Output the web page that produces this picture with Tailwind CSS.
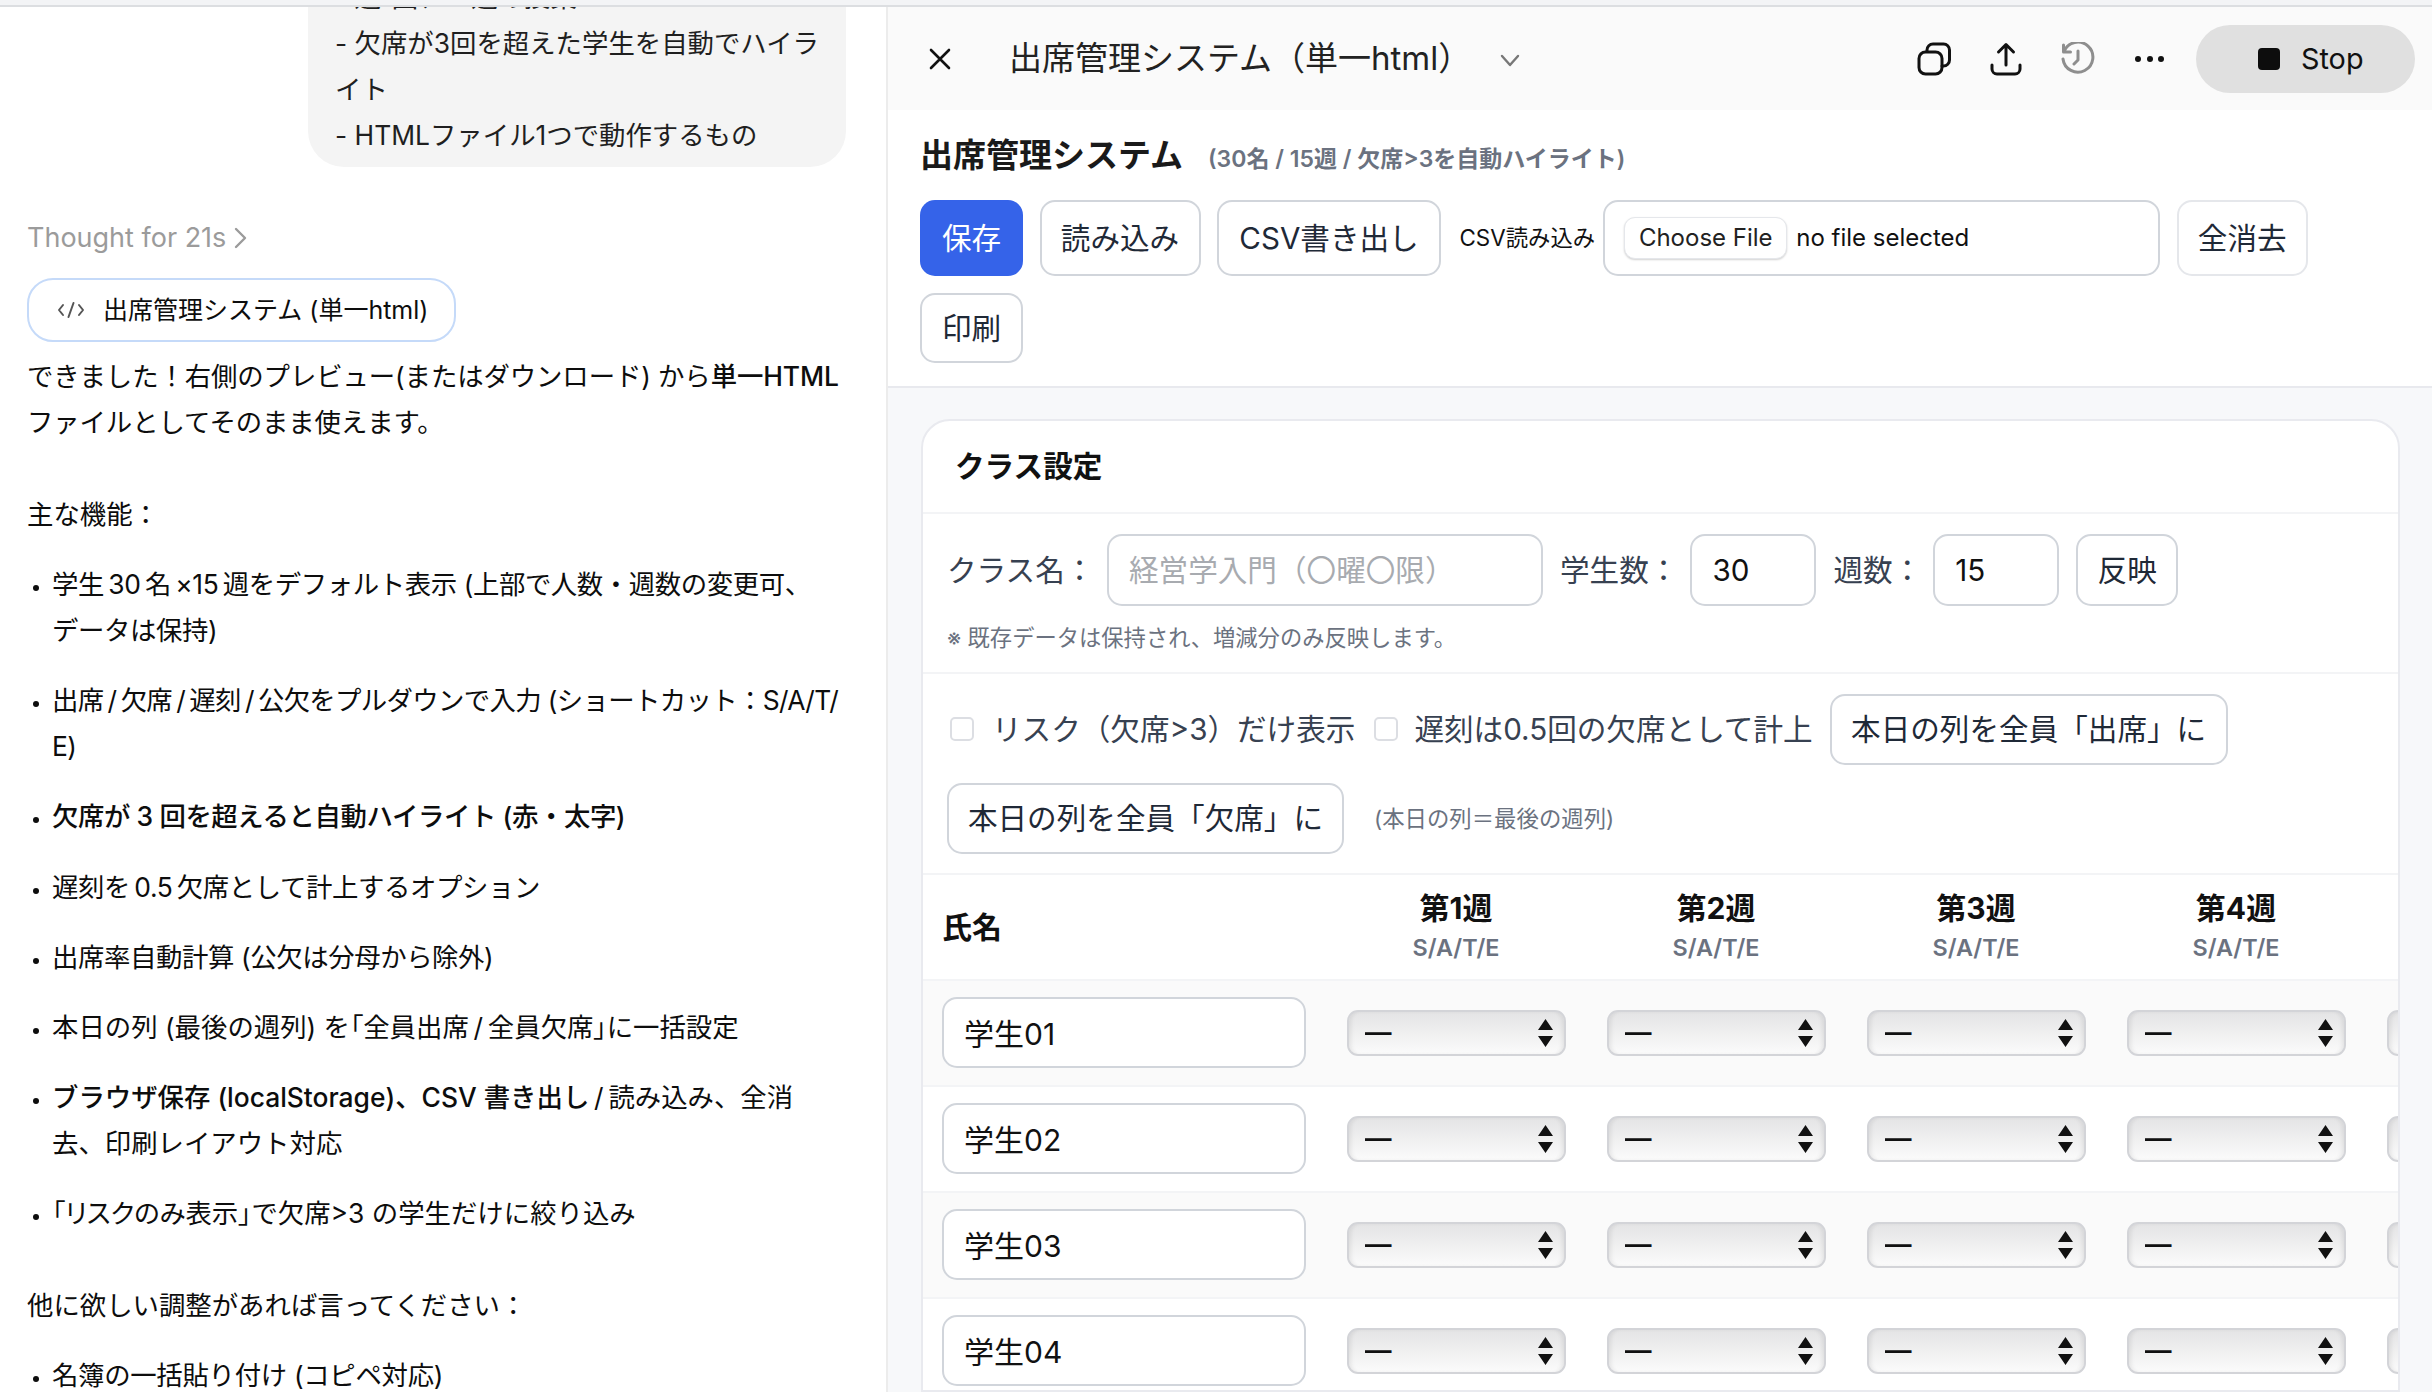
<!DOCTYPE html>
<html lang="ja">
<head>
  <meta charset="UTF-8" />
  <title>出席管理システム</title>
  <script src="https://cdn.jsdelivr.net/npm/@tailwindcss/browser@4"></script>
</head>
<body class="h-screen overflow-hidden bg-white text-[#0d0d0d] font-['Inter','Noto_Sans_CJK_JP',sans-serif]">
  <div class="h-[7px] bg-[#f3f4f6] border-b-2 border-[#dcdee1]"></div>
  <div class="flex h-[1385px]">

    <!-- chat -->
    <aside class="w-[888px] shrink-0 border-r-2 border-[#ececec] overflow-hidden pl-[27px] text-[26.4px] leading-[46px]">
      <div class="-mt-[33px] ml-[281px] w-[538px] bg-[#f4f4f4] rounded-b-[36px] pl-[27px] pb-[9px] text-[#1f1f1f]">
        - 週1回、15週の授業<br>
        - 欠席が3回を超えた学生を自動でハイラ<br>イト<br>
        - HTMLファイル1つで動作するもの
      </div>

      <div class="mt-[48px] flex items-center gap-[8px] text-[27px] text-[#9b9b9b]">
        Thought for 21s
        <svg class="w-[14px] h-[24px]" viewBox="0 0 14 24" fill="none" stroke="currentColor" stroke-width="2.4" stroke-linecap="round" stroke-linejoin="round"><path d="M2 3l9 9-9 9"/></svg>
      </div>

      <div class="mt-[17px] w-[429px] h-[64px] border-2 border-[#c5daf9] rounded-[26px] flex items-center pl-[28px] gap-[18px] text-[24px]">
        <svg class="w-[28px] h-[20px] shrink-0" viewBox="0 0 28 20" fill="none" stroke="#555" stroke-width="2" stroke-linecap="round" stroke-linejoin="round"><path d="M6 5l-4 5 4 5M22 5l4 5-4 5M16.500 3l-5 14"/></svg>
        <span class="text-[25px]">出席管理システム (単一html)</span>
      </div>

      <p class="mt-[11px] tracking-[-0.1px]">できました！右側のプレビュー(またはダウンロード) から<span class="font-medium">単一HTML</span><br>ファイルとしてそのまま使えます。</p>

      <p class="mt-[46px]">主な機能：</p>
      <ul class="mt-[24px] list-disc pl-[25px] space-y-[24.2px] whitespace-nowrap tracking-[-0.4px] marker:text-[20px]">
        <li>学生&thinsp;30&thinsp;名&thinsp;×15&thinsp;週をデフォルト表示 (上部で人数・週数の変更可、<br>データは保持)</li>
        <li class="tracking-[-0.65px]">出席&thinsp;/&thinsp;欠席&thinsp;/&thinsp;遅刻&thinsp;/&thinsp;公欠をプルダウンで入力 (ショートカット：S/A/T/<br>E)</li>
        <li class="font-medium">欠席が 3 回を超えると自動ハイライト (赤・太字)</li>
        <li>遅刻を&thinsp;0.5&thinsp;欠席として計上するオプション</li>
        <li>出席率自動計算 (公欠は分母から除外)</li>
        <li class="tracking-normal">本日の列 (最後の週列) を<span class="[font-feature-settings:'palt']">「全員出席&thinsp;/&thinsp;全員欠席」</span>に一括設定</li>
        <li class="tracking-normal"><span class="font-medium">ブラウザ保存 (localStorage)、CSV 書き出し</span>&thinsp;/&thinsp;読み込み、全消<br>去、印刷レイアウト対応</li>
        <li class="tracking-normal"><span class="[font-feature-settings:'palt']">「リスクのみ表示」</span>で欠席>3 の学生だけに絞り込み</li>
      </ul>

      <p class="mt-[46px]">他に欲しい調整があれば言ってください：</p>
      <ul class="mt-[24px] list-disc pl-[25px] marker:text-[20px]">
        <li class="tracking-[-0.3px]">名簿の一括貼り付け (コピペ対応)</li>
      </ul>
    </aside>

    <!-- preview -->
    <main class="flex-1 min-w-0 flex flex-col bg-[#f7f8fa]">
      <header class="h-[103px] shrink-0 bg-[#fafafa] flex items-center pl-[41px] pr-[17px]">
        <svg class="w-[22px] h-[22px] shrink-0" viewBox="0 0 22 22" fill="none" stroke="#111" stroke-width="2.6" stroke-linecap="round"><path d="M2 2l18 18M20 2L2 20"/></svg>
        <span class="ml-[58px] text-[33px] leading-none text-[#222]">出席管理システム（単一html）</span>
        <svg class="ml-[29px] mt-[3px] w-[20px] h-[13px] shrink-0" viewBox="0 0 20 13" fill="none" stroke="#777" stroke-width="2.4" stroke-linecap="round" stroke-linejoin="round"><path d="M2 2l8 9 8-9"/></svg>

        <div class="ml-auto flex items-center gap-[38px]">
          <svg class="w-[34px] h-[34px]" viewBox="0 0 34 34" fill="none" stroke="#111" stroke-width="3"><rect x="2" y="10" width="23" height="22" rx="6.500"/><path d="M10 9.500V8a6 6 0 0 1 6-6h10.500a6 6 0 0 1 6 6v10a6 6 0 0 1-6 6H25" stroke-linecap="round"/></svg>
          <svg class="w-[34px] h-[34px]" viewBox="0 0 34 34" fill="none" stroke="#111" stroke-width="3" stroke-linecap="round" stroke-linejoin="round"><path d="M17 3v20M9.500 10L17 2.500 24.500 10M3 23v4a5 5 0 0 0 5 5h18a5 5 0 0 0 5-5v-4"/></svg>
          <svg class="w-[34px] h-[34px]" viewBox="0 0 34 34" fill="none" stroke="#8e8e8e" stroke-width="3" stroke-linecap="round" stroke-linejoin="round"><path d="M3 9.500A15 15 0 1 1 2 17M2.500 3v7h7M17 9v9l-4 4"/></svg>
          <svg class="w-[34px] h-[34px]" viewBox="0 0 34 34" fill="#111"><circle cx="5" cy="17" r="3"/><circle cx="17" cy="17" r="3"/><circle cx="28" cy="17" r="3"/></svg>
        </div>
        <button class="ml-[29px] w-[219px] h-[68px] rounded-full bg-[#e0e0e0] flex items-center pl-[62px] gap-[21px] text-[28.8px] text-[#111]">
          <span class="w-[22px] h-[22px] rounded-[4px] bg-[#0d0d0d]"></span>
          Stop
        </button>
      </header>

      <section class="h-[278px] shrink-0 bg-white border-b-2 border-[#e8e9ee] pl-[32px] pr-[32px]">
        <h1 class="h-[90px] pt-[2px] flex items-center gap-[25px] text-[33px] font-bold text-[#1a1a1a]">
          出席管理システム
          <span class="mt-[6px] text-[23px] font-semibold text-[#6b7280]">(30名 / 15週 / 欠席>3を自動ハイライト)</span>
        </h1>
        <div class="flex flex-wrap gap-x-[16.500px] gap-y-[17px] text-[29.6px] text-[#1f2937]">
          <button class="w-[103px] h-[76px] rounded-[15px] bg-[#3563e9] text-white">保存</button>
          <button class="w-[161px] h-[76px] rounded-[15px] bg-white border-2 border-[#d1d5db]">読み込み</button>
          <button class="w-[224px] h-[76px] rounded-[15px] bg-white border-2 border-[#d1d5db]">CSV書き出し</button>
          <div class="flex items-center gap-[8px] ml-[2px]">
            <span class="text-[22.4px] text-[#111]">CSV読み込み</span>
            <div class="w-[557px] h-[76px] rounded-[15px] border-2 border-[#d1d5db] flex items-center pl-[19px] gap-[9px] text-[25px] text-[#111]">
              <button class="w-[163px] h-[42px] rounded-[11px] border border-[#e5e7eb] shadow-[0_1px_2px_rgba(0,0,0,.18)] bg-white text-[24px] text-[#222]">Choose File</button>
              <span class="text-[24px]">no file selected</span>
            </div>
          </div>
          <button class="w-[131px] h-[76px] rounded-[15px] bg-white border-2 border-[#e5e7eb]">全消去</button>
          <button class="w-[103px] h-[70px] rounded-[15px] bg-white border-2 border-[#d1d5db]">印刷</button>
        </div>
      </section>

      <div class="flex-1 min-h-0 pt-[31px] pl-[33px] pr-[32px]">
        <div class="bg-white border-2 border-[#e9eaef] rounded-t-[29px] overflow-hidden h-full">
          <div class="h-[93px] pl-[32px] flex items-center border-b-2 border-[#f3f4f6] text-[29.6px] font-bold text-[#111]">クラス設定</div>

          <div class="h-[160px] pl-[24px] pt-[20px] border-b-2 border-[#f3f4f6]">
            <div class="flex items-center h-[72px] text-[29.6px] text-[#374151]">
              <label class="w-[144px] whitespace-nowrap">クラス名：</label>
              <input class="ml-[16px] w-[436px] h-[72px] rounded-[15px] border-2 border-[#d1d5db] px-[20px] placeholder:text-[#a8abb0]" placeholder="経営学入門（〇曜〇限）">
              <label class="ml-[17px]">学生数：</label>
              <input class="ml-[12px] w-[126px] h-[72px] rounded-[15px] border-2 border-[#d1d5db] px-[20px] text-[#111]" value="30">
              <label class="ml-[17px]">週数：</label>
              <input class="ml-[11px] w-[126px] h-[72px] rounded-[15px] border-2 border-[#d1d5db] px-[20px] text-[#111]" value="15">
              <button class="ml-[17px] w-[102px] h-[72px] rounded-[15px] border-2 border-[#d1d5db] text-[#1f2937]">反映</button>
            </div>
            <p class="mt-[15px] text-[22.3px] text-[#6b7280]">※ 既存データは保持され、増減分のみ反映します。</p>
          </div>

          <div class="h-[201px] pl-[24px] pr-[24px] pt-[20px] border-b-2 border-[#f3f4f6] flex flex-wrap items-center content-start gap-y-[18px] text-[29.6px] text-[#374151]">
            <label class="flex items-center gap-[18px] pl-[3px]">
              <input type="checkbox" class="appearance-none w-[24px] h-[24px] rounded-[5px] border-2 border-[#dcdee3] bg-white">
              リスク（欠席>3）だけ表示
            </label>
            <label class="ml-[19px] flex items-center gap-[16px]">
              <input type="checkbox" class="appearance-none w-[24px] h-[24px] rounded-[5px] border-2 border-[#dcdee3] bg-white">
              遅刻は0.5回の欠席として計上
            </label>
            <button class="ml-[17px] w-[398px] h-[71px] rounded-[15px] border-2 border-[#d1d5db] text-[#1f2937]">本日の列を全員「出席」に</button>
            <button class="w-[397px] h-[71px] rounded-[15px] border-2 border-[#d1d5db] text-[#1f2937]">本日の列を全員「欠席」に</button>
            <span class="ml-[30px] text-[22.4px] text-[#6b7280]">(本日の列＝最後の週列)</span>
          </div>

          <div id="table"></div>
        </div>
      </div>
    </main>
  </div>

  <script>
    // rows + weeks are generated, only what fits on screen
    const WEEKS = 5, STUDENTS = 4;
    let head = '<div class="w-[403px] shrink-0 pl-[19px] text-[30px] font-bold text-[#111]">氏名</div>';
    for (let w = 1; w < WEEKS; w++) {
      head += `<div class="w-[260px] shrink-0 text-center">
        <div class="text-[30px] leading-[40px] font-bold text-[#111]">第${w}週</div>
        <div class="pt-[2px] text-[23.4px] leading-[36px] font-semibold text-[#6b7280]">S/A/T/E</div>
      </div>`;
    }
    let html = `<div class="flex items-center h-[106px] border-b-2 border-[#f3f4f6]">${head}</div>`;

    for (let s = 1; s <= STUDENTS; s++) {
      const name = '学生' + String(s).padStart(2, '0');
      let row = `<div class="w-[403px] shrink-0 pl-[19px] pb-[2px]"><input value="${name}" class="w-[364px] h-[71px] rounded-[15px] bg-white border-2 border-[#d1d5db] px-[20px] text-[30px] text-[#111]"></div>`;
      for (let w = 1; w <= WEEKS; w++) {
        row += `<div class="w-[260px] shrink-0 flex justify-center">
          <div class="relative w-[219px] h-[46px]">
            <select class="appearance-none w-full h-full rounded-[11px] border-2 border-[#d3d4d8] bg-linear-to-b from-[#e4e4e5] to-[#fbfbfb] shadow-[inset_4px_0_4px_-2px_rgba(0,0,0,.08),inset_-4px_0_4px_-2px_rgba(0,0,0,.08)] pl-[16px] text-[27px] font-semibold text-[#111]"><option>—</option></select>
            <svg class="absolute right-[13px] top-[9px] w-[15px] h-[28px]" viewBox="0 0 15 28" fill="#111"><path d="M7.500 0L15 11H0zM7.500 28L0 17h15z"/></svg>
          </div>
        </div>`;
      }
      html += `<div class="flex items-center h-[106px] border-b-2 border-[#f3f4f6] ${s % 2 === 1 ? 'bg-[#fafafa]' : 'bg-white'}">${row}</div>`;
    }
    document.getElementById('table').innerHTML = html;
  </script>
</body>
</html>
